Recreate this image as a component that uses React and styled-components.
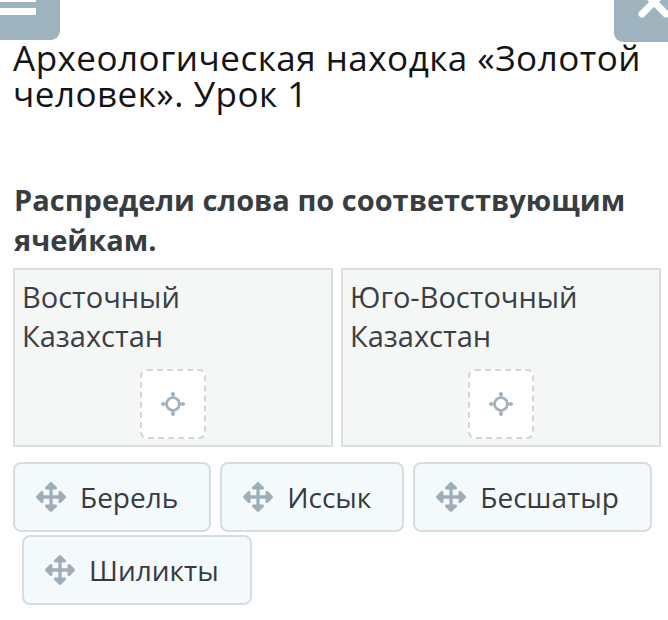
import React from "react";
import styled, { createGlobalStyle } from "styled-components";
import { FaArrowsAlt } from "react-icons/fa";

const Global = createGlobalStyle`
  html, body { margin: 0; padding: 0; background: #fff; }
  body { font-family: "Open Sans", "Noto Sans", sans-serif; width: 668px; overflow: hidden; }
`;

const Page = styled.div`
  width: 668px;
  height: 620px;
  background: #fff;
  overflow: hidden;
`;

const TopBar = styled.div`
  display: flex;
  justify-content: space-between;
  height: 42px;
`;

const MenuButton = styled.div`
  width: 60px;
  height: 40px;
  background: #9fb3bf;
  border-bottom-right-radius: 9px;
  display: flex;
  flex-direction: column;
  gap: 6px;
`;

const MenuLine = styled.div`
  width: 36px;
  height: ${(p) => p.$h}px;
  background: #fff;
`;

const CloseButton = styled.div`
  width: 54px;
  height: 42px;
  background: #9fb3bf;
  border-bottom-left-radius: 9px;
  display: flex;
  justify-content: flex-end;
`;

const Content = styled.div`
  padding: 0 7px 0 13px;
`;

const Title = styled.h1`
  margin: -2px 0 0 0;
  font-weight: 400;
  font-size: 35px;
  line-height: 36px;
  letter-spacing: 0.5px;
  color: #141414;
  width: 650px;
`;

const Instruction = styled.h2`
  margin: 68px 0 0 1px;
  font-weight: 700;
  font-size: 29px;
  line-height: 40px;
  color: #383d42;
`;

const Cells = styled.div`
  margin-top: 8px;
  display: grid;
  grid-template-columns: 320px 320px;
  gap: 8px;
`;

const Cell = styled.div`
  background: #f5f6f6;
  border: 2px solid #d9dfdf;
  height: 179px;
  box-sizing: border-box;
  padding: 7px 7px 6px 7px;
  display: flex;
  flex-direction: column;
`;

const CellLabel = styled.div`
  font-size: 29px;
  line-height: 39px;
  color: #3a3f44;
  max-width: 270px;
`;

const DropZone = styled.div`
  margin: 14px auto 0;
  width: 66px;
  height: 70px;
  box-sizing: border-box;
  border: 2px dashed #d2d6d8;
  border-radius: 7px;
  background: #fff;
  display: flex;
  align-items: center;
  justify-content: center;
`;

const Tokens = styled.div`
  margin-top: 15px;
  display: flex;
  flex-wrap: wrap;
  column-gap: 9px;
  row-gap: 3px;
`;

const Token = styled.div`
  height: 70px;
  box-sizing: border-box;
  border: 2px solid #d5dde1;
  border-radius: 8px;
  background: #f4f9fc;
  display: flex;
  align-items: center;
  gap: 14px;
  padding: 0 31px 0 21px;
  margin-left: ${(p) => (p.$indent ? "9px" : "0")};
  font-size: 28px;
  color: #363b40;
`;

const MoveIcon = styled(FaArrowsAlt)`
  width: 30px;
  height: 30px;
  color: #9eaeb8;
  flex: none;
`;

const TargetIcon = () => (
  <svg width="28" height="28" viewBox="0 0 24 24">
    <circle cx="12" cy="12" r="5.5" fill="none" stroke="#a3b2bb" strokeWidth="2.4" />
    <circle cx="12" cy="3.5" r="1.8" fill="#a3b2bb" />
    <circle cx="12" cy="20.5" r="1.8" fill="#a3b2bb" />
    <circle cx="3.5" cy="12" r="1.8" fill="#a3b2bb" />
    <circle cx="20.5" cy="12" r="1.8" fill="#a3b2bb" />
    <line x1="12" y1="3.5" x2="12" y2="7" stroke="#a3b2bb" strokeWidth="2" />
    <line x1="12" y1="17" x2="12" y2="20.5" stroke="#a3b2bb" strokeWidth="2" />
    <line x1="3.5" y1="12" x2="7" y2="12" stroke="#a3b2bb" strokeWidth="2" />
    <line x1="17" y1="12" x2="20.5" y2="12" stroke="#a3b2bb" strokeWidth="2" />
  </svg>
);

const CloseGlyph = () => (
  <svg width="32" height="20" viewBox="0 0 32 20">
    <path d="M6 -10 L30 14 M30 -10 L6 14" stroke="#fff" strokeWidth="7" strokeLinecap="round" />
  </svg>
);

const cells = ["Восточный Казахстан", "Юго-Восточный Казахстан"];
const words = ["Берель", "Иссык", "Бесшатыр", "Шиликты"];

export default function App() {
  return (
    <Page>
      <Global />
      <TopBar>
        <MenuButton>
          <MenuLine $h={2} />
          <MenuLine $h={7} />
        </MenuButton>
        <CloseButton>
          <CloseGlyph />
        </CloseButton>
      </TopBar>
      <Content>
        <Title>Археологическая находка «Золотой человек». Урок 1</Title>
        <Instruction>Распредели слова по соответствующим ячейкам.</Instruction>
        <Cells>
          {cells.map((c) => (
            <Cell key={c}>
              <CellLabel>{c}</CellLabel>
              <DropZone>
                <TargetIcon />
              </DropZone>
            </Cell>
          ))}
        </Cells>
        <Tokens>
          {words.map((w, i) => (
            <Token key={w} $indent={i === 3}>
              <MoveIcon />
              {w}
            </Token>
          ))}
        </Tokens>
      </Content>
    </Page>
  );
}
